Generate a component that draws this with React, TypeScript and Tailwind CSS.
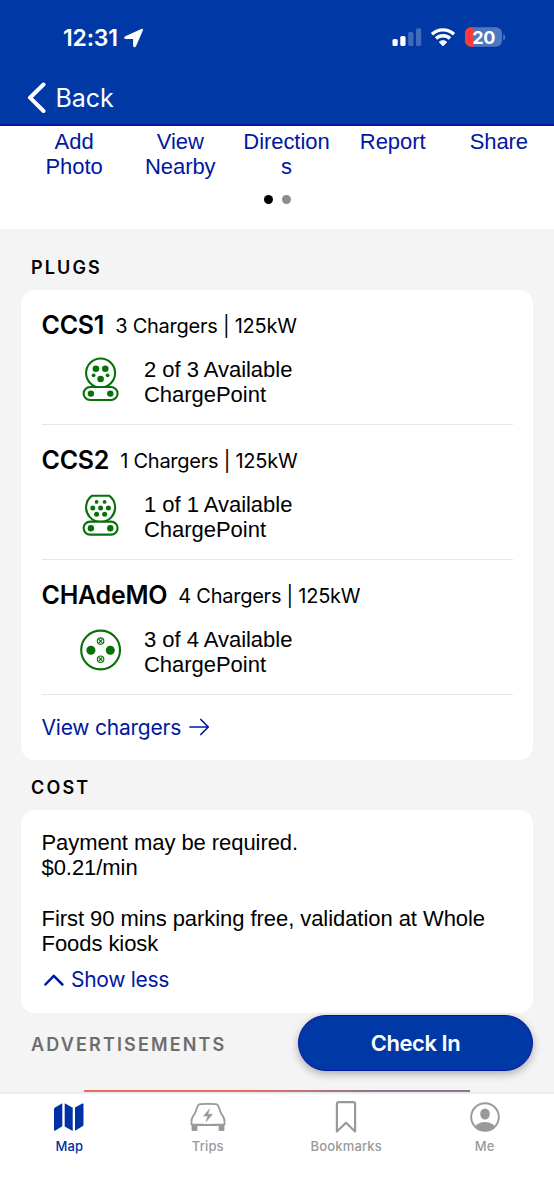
import type { ReactNode } from "react";

const GREEN = "#087008";

function StatusBar() {
  return (
    <div className="flex h-[74px] items-center justify-between pl-[63px] pr-[48px] pt-[1px] text-white">
      <div className="flex items-center">
        <span className="mt-[2px] w-[61px] whitespace-nowrap text-[23px] font-semibold tracking-[-0.2px]">12:31</span>
        <svg width="20" height="20" viewBox="0 0 20 20">
          <path d="M18.2 1.6 11.2 17.8q-.7 1.2-1.2-.2V10.2H1.9q-1.4-.4-.2-1.1Z" fill="white" stroke="white" strokeWidth="1.8" strokeLinejoin="round" />
        </svg>
      </div>
      <div className="flex items-center">
        <svg width="30" height="20" viewBox="0 0 30 20">
          <rect x="0.5" y="11" width="5.2" height="7" rx="1.6" fill="white" />
          <rect x="8.3" y="8" width="5.2" height="10" rx="1.6" fill="white" />
          <rect x="16.2" y="4" width="5.2" height="14" rx="1.6" fill="white" fillOpacity="0.25" />
          <rect x="24" y="0.3" width="5.2" height="17.7" rx="1.6" fill="white" fillOpacity="0.25" />
        </svg>
        <svg width="26" height="20" viewBox="0 0 26 20" className="ml-[8px]">
          <path d="M2 6.3a16 16 0 0 1 22 0M6 10.5a10.2 10.2 0 0 1 14 0" fill="none" stroke="white" strokeWidth="3.4" />
          <path d="m13 18-3.8-3.9a5.5 5.5 0 0 1 7.6 0Z" fill="white" stroke="white" strokeWidth="0.8" strokeLinejoin="round" />
        </svg>
        <svg width="41" height="20" viewBox="0 0 41 20" className="mb-[1px] ml-[9px]">
          <defs>
            <clipPath id="level">
              <rect width="8.2" height="20" />
            </clipPath>
          </defs>
          <rect x="0" y="0.2" width="37" height="19.6" rx="6.2" fill="#5078c0" />
          <rect x="0" y="0.2" width="37" height="19.6" rx="6.2" fill="#ff3b36" clipPath="url(#level)" />
          <path d="M38.3 6.9c2.6.8 2.6 5.6 0 6.4Z" fill="#5078c0" />
          <text x="18.6" y="16.5" textAnchor="middle" fontSize="18" fontWeight="700" letterSpacing="-0.5" fill="white">20</text>
        </svg>
      </div>
    </div>
  );
}

function Action({ lines }: { lines: string[] }) {
  return (
    <div className="flex w-[106.2px] flex-col items-center">
      {lines.map((line) => (
        <span key={line}>{line}</span>
      ))}
    </div>
  );
}

function Ccs1Icon() {
  return (
    <svg width="42" height="48" viewBox="0 0 42 48" fill="none" stroke={GREEN} strokeWidth="2.1">
      <circle cx="20.6" cy="17" r="14.5" />
      <rect x="3.6" y="31" width="34" height="13" rx="6.5" fill="white" />
      <g fill={GREEN} stroke="none">
        <circle cx="15.9" cy="12.7" r="3.3" />
        <circle cx="25.3" cy="12.7" r="3.3" />
        <circle cx="13.6" cy="19.3" r="1.9" />
        <circle cx="27.6" cy="19.3" r="1.9" />
        <circle cx="20.6" cy="23" r="3.3" />
        <circle cx="10.9" cy="37.6" r="3.2" />
        <circle cx="30.3" cy="37.6" r="3.2" />
      </g>
    </svg>
  );
}

function Ccs2Icon() {
  return (
    <svg width="42" height="48" viewBox="0 0 42 48" fill="none" stroke={GREEN} strokeWidth="2.1">
      <path d="M12.1 4.7h17A14.5 14.5 0 1 1 12.1 4.7Z" strokeLinejoin="round" />
      <rect x="3.6" y="30.6" width="34" height="13" rx="6.5" fill="white" />
      <g fill={GREEN} stroke="none">
        <circle cx="16.6" cy="10.9" r="1.9" />
        <circle cx="24.6" cy="10.9" r="1.9" />
        <circle cx="12.8" cy="17" r="2.5" />
        <circle cx="20.6" cy="17" r="2.5" />
        <circle cx="28.4" cy="17" r="2.5" />
        <circle cx="16.6" cy="23.3" r="2.5" />
        <circle cx="24.6" cy="23.3" r="2.5" />
        <circle cx="10.9" cy="37.2" r="3.2" />
        <circle cx="30.3" cy="37.2" r="3.2" />
      </g>
    </svg>
  );
}

function ChademoIcon() {
  return (
    <svg width="42" height="48" viewBox="0 0 42 48" fill="none" stroke={GREEN} strokeWidth="2.1">
      <circle cx="20.6" cy="24" r="19.4" />
      <circle cx="10.9" cy="24.2" r="4.5" fill={GREEN} stroke="none" />
      <circle cx="30.3" cy="24.2" r="4.5" fill={GREEN} stroke="none" />
      <g strokeWidth="1.2">
        <circle cx="20.6" cy="15.1" r="3.2" />
        <circle cx="20.6" cy="33.2" r="3.2" />
        <path d="m18.9 13.4 3.4 3.4m0-3.4-3.4 3.4m0 14.7 3.4 3.4m0-3.4-3.4 3.4" />
      </g>
    </svg>
  );
}

function Plug({ name, detail, status, icon }: { name: string; detail: string; status: string; icon: ReactNode }) {
  return (
    <div className="h-[135.3px] border-b border-[#e6e6e6] pt-[20px]">
      <div className="flex h-8 items-center whitespace-nowrap">
        <span className="text-[25px] font-semibold tracking-[-0.25px]">{name}</span>
        <span className="ml-[11px] text-[20px] tracking-[-0.25px]">{detail}</span>
      </div>
      <div className="mt-[14px] flex pl-[38px]">
        {icon}
        <div className="ml-[22.5px] mt-[1px] font-['Liberation_Sans',sans-serif] text-[22px] leading-[25.3px] tracking-[-0.03px]">
          <div>{status}</div>
          <div>ChargePoint</div>
        </div>
      </div>
    </div>
  );
}

function Tab({ label, active, children }: { label: string; active?: boolean; children: ReactNode }) {
  return (
    <div className={`flex flex-1 flex-col items-center ${active ? "text-[#0030a6]" : "text-[#999999]"}`}>
      <div className="flex h-[38px] items-center">{children}</div>
      <span className="mt-[1px] text-[13px] font-medium leading-[18px] tracking-[0.15px]">{label}</span>
    </div>
  );
}

export default function App() {
  return (
    <div className="relative flex h-[1200px] w-[554px] flex-col overflow-hidden bg-[#f4f4f4] font-[Inter,sans-serif] text-black">
      <header className="h-[126px] shrink-0 border-b-2 border-[#0018a0] bg-[#0039a6]">
        <StatusBar />
        <div className="flex h-[48px] items-center pl-[27px] text-white">
          <svg width="20" height="32" viewBox="0 0 20 32" fill="none" stroke="white" strokeWidth="4" strokeLinecap="round" strokeLinejoin="round">
            <path d="M16.5 2.5 3 15.7l13.5 13.3" />
          </svg>
          <span className="ml-[8.5px] mt-[1px] text-[25px] tracking-[-0.1px]">Back</span>
        </div>
      </header>

      <section className="h-[103px] shrink-0 bg-white pl-[21px] pt-[3px]">
        <div className="flex font-['Liberation_Sans',sans-serif] text-[22px] leading-[25.3px] tracking-[-0.06px] text-[#0018a0]">
          <Action lines={["Add", "Photo"]} />
          <Action lines={["View", "Nearby"]} />
          <Action lines={["Direction", "s"]} />
          <Action lines={["Report"]} />
          <Action lines={["Share"]} />
        </div>
        <div className="ml-[242.5px] mt-[15px] flex gap-[9px]">
          <span className="size-[9px] rounded-full bg-black" />
          <span className="size-[9px] rounded-full bg-[#8c8c8c]" />
        </div>
      </section>

      <main className="flex h-[863px] shrink-0 flex-col px-[21px]">
        <h2 className="flex h-[60.5px] items-center pl-[10px] pt-[16px] text-[18px] font-semibold tracking-[2.15px]">PLUGS</h2>
        <section className="h-[470.5px] rounded-[14px] bg-white px-[20.5px]">
          <Plug name="CCS1" detail="3 Chargers | 125kW" status="2 of 3 Available" icon={<Ccs1Icon />} />
          <Plug name="CCS2" detail="1 Chargers | 125kW" status="1 of 1 Available" icon={<Ccs2Icon />} />
          <Plug name="CHAdeMO" detail="4 Chargers | 125kW" status="3 of 4 Available" icon={<ChademoIcon />} />
          <div className="flex h-[64px] items-center text-[#0018a0]">
            <span className="text-[21px] tracking-[-0.22px]">View chargers</span>
            <svg width="21" height="18" viewBox="0 0 21 18" className="ml-[7.5px]" fill="none" stroke="currentColor" strokeWidth="1.7" strokeLinecap="round" strokeLinejoin="round">
              <path d="M1 9h18M11.8 1.5 19.3 9l-7.5 7.5" />
            </svg>
          </div>
        </section>
        <h2 className="flex h-[49.5px] items-center pl-[10px] pt-[6px] text-[18px] font-semibold tracking-[2.15px]">COST</h2>
        <section className="h-[203.5px] rounded-[14px] bg-white px-[20.5px] pt-[20.5px]">
          <div className="whitespace-pre font-['Liberation_Sans',sans-serif] text-[22px] leading-[25.2px] tracking-[-0.06px]">
            {"Payment may be required.\n$0.21/min\n\nFirst 90 mins parking free, validation at Whole\nFoods kiosk"}
          </div>
          <div className="mt-[8px] flex h-[32px] items-center text-[#0018a0]">
            <svg width="24" height="16" viewBox="0 0 24 16" fill="none" stroke="currentColor" strokeWidth="2.5" strokeLinecap="round" strokeLinejoin="round">
              <path d="m3.4 12.5 8.4-8.6 8.6 8.6" />
            </svg>
            <span className="ml-[5.5px] text-[21px] tracking-[-0.3px]">Show less</span>
          </div>
        </section>
        <h2 className="flex h-[63px] items-center pl-[10px] text-[18px] font-semibold tracking-[2.15px] text-[#6d6d6d]">ADVERTISEMENTS</h2>
        <div className="ml-[63px] mt-[13.5px] h-[2px] w-[386px] bg-linear-to-r from-[#ed6a5e] from-40% to-[#8a7590] to-75%" />
      </main>

      <nav className="flex h-[108px] shrink-0 border-t-2 border-[#ececec] bg-white pt-[4px]">
        <Tab label="Map" active>
          <svg width="32" height="30" viewBox="0 0 32 30" fill="currentColor">
            <path d="M1 7.2Q1 6 2 5.4L9.3 1.3v23L2 28.7q-1 .2-1-.8ZM11.7 1.3l8 4.5V29l-8-4.5ZM22 5.6 29.3 1.5q1.2-.4 1.2.8v20.2q0 1.2-1 1.8L22 28.7Z" />
          </svg>
        </Tab>
        <Tab label="Trips">
          <svg width="36" height="30" viewBox="0 0 36 30" fill="none" stroke="currentColor" strokeWidth="1.8" strokeLinejoin="round">
            <path d="M10 2.2q8-.8 16 0 1.7.3 2.3 1.8L31 11.3l2 3q1.5 2.5 1.5 5.2V22.5q-16.5 1-33 0v-3q0-2.7 1.5-5.2l2-3L7.7 4q.6-1.5 2.3-1.8Z" />
            <path d="M2.5 24h4v4h-4ZM29.5 24h4v4h-4Z" fill="currentColor" />
            <path d="m19.6 6.7-6.1 7.4h4.2l-1.6 5.6 6.4-7.5H18Z" fill="currentColor" strokeWidth="0.5" />
          </svg>
        </Tab>
        <Tab label="Bookmarks">
          <svg width="22" height="32" viewBox="0 0 22 32" fill="none" stroke="currentColor" strokeWidth="2.2" strokeLinejoin="round">
            <path d="M1.9 30.5V3.2Q1.9 1.2 3.9 1.2h14.2q2 0 2 2V30.5L11 21.7Z" />
          </svg>
        </Tab>
        <Tab label="Me">
          <svg width="30" height="30" viewBox="0 0 30 30">
            <defs>
              <clipPath id="avatar">
                <circle cx="15" cy="15" r="14" />
              </clipPath>
            </defs>
            <circle cx="15" cy="15" r="13.8" fill="none" stroke="currentColor" strokeWidth="1.9" />
            <ellipse cx="15" cy="12" rx="4.8" ry="5.5" fill="currentColor" />
            <ellipse cx="15" cy="27.3" rx="10.8" ry="7.3" fill="currentColor" clipPath="url(#avatar)" />
          </svg>
        </Tab>
      </nav>

      <button className="absolute left-[298px] top-[1015px] h-[56px] w-[235px] rounded-full border border-[#0018a0] bg-[#0039a6] text-[22px] font-semibold tracking-[-0.45px] text-white shadow-[0_3px_8px_rgba(0,0,0,0.3)]">
        Check In
      </button>
    </div>
  );
}
